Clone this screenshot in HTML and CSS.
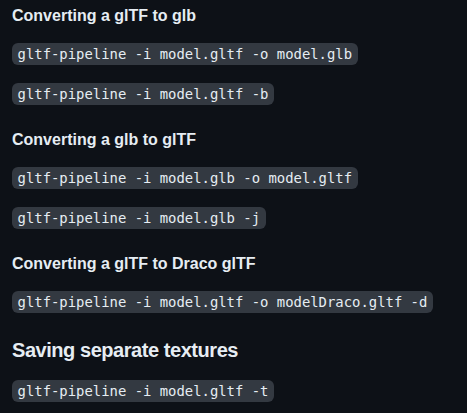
FILE: index.html
```html
<!DOCTYPE html>
<html>
<head>
<meta charset="utf-8">
<link rel="stylesheet" href="styles.css">
</head>
<body>
<article class="markdown">
  <h4 class="h4">Converting a glTF to glb</h4>
  <p class="p"><code class="code">gltf-pipeline -i model.gltf -o model.glb</code></p>
  <p class="p"><code class="code">gltf-pipeline -i model.gltf -b</code></p>
  <h4 class="h4">Converting a glb to glTF</h4>
  <p class="p"><code class="code">gltf-pipeline -i model.glb -o model.gltf</code></p>
  <p class="p"><code class="code">gltf-pipeline -i model.glb -j</code></p>
  <h4 class="h4">Converting a glTF to Draco glTF</h4>
  <p class="p"><code class="code">gltf-pipeline -i model.gltf -o modelDraco.gltf -d</code></p>
  <h3 class="h3">Saving separate textures</h3>
  <p class="p"><code class="code">gltf-pipeline -i model.gltf -t</code></p>
</article>
</body>
</html>
```

FILE: styles.css
```css
html, body {
  margin: 0;
  padding: 0;
  background: #0d1117;
}
body {
  color: #e6edf3;
  font-family: "Liberation Sans", Arial, sans-serif;
  font-size: 16px;
  line-height: 1.5;
}
.markdown {
  padding: 6px 12px;
}
.h4, .h3 {
  font-weight: 600;
  line-height: 1.25;
  margin: 24px 0 16px;
  color: #e6edf3;
}
.h4:first-child {
  margin-top: 0;
}
.h4 {
  font-size: 16px;
}
.h3 {
  font-size: 20px;
  letter-spacing: -0.45px;
}
.p {
  margin: 0 0 16px;
}
.code {
  font-family: "DejaVu Sans Mono", "Liberation Mono", monospace;
  font-size: 13.9px;
  padding: 0.2em 0.4em;
  background: rgba(110, 118, 129, 0.4);
  border-radius: 6px;
  color: #e6edf3;
}
```
